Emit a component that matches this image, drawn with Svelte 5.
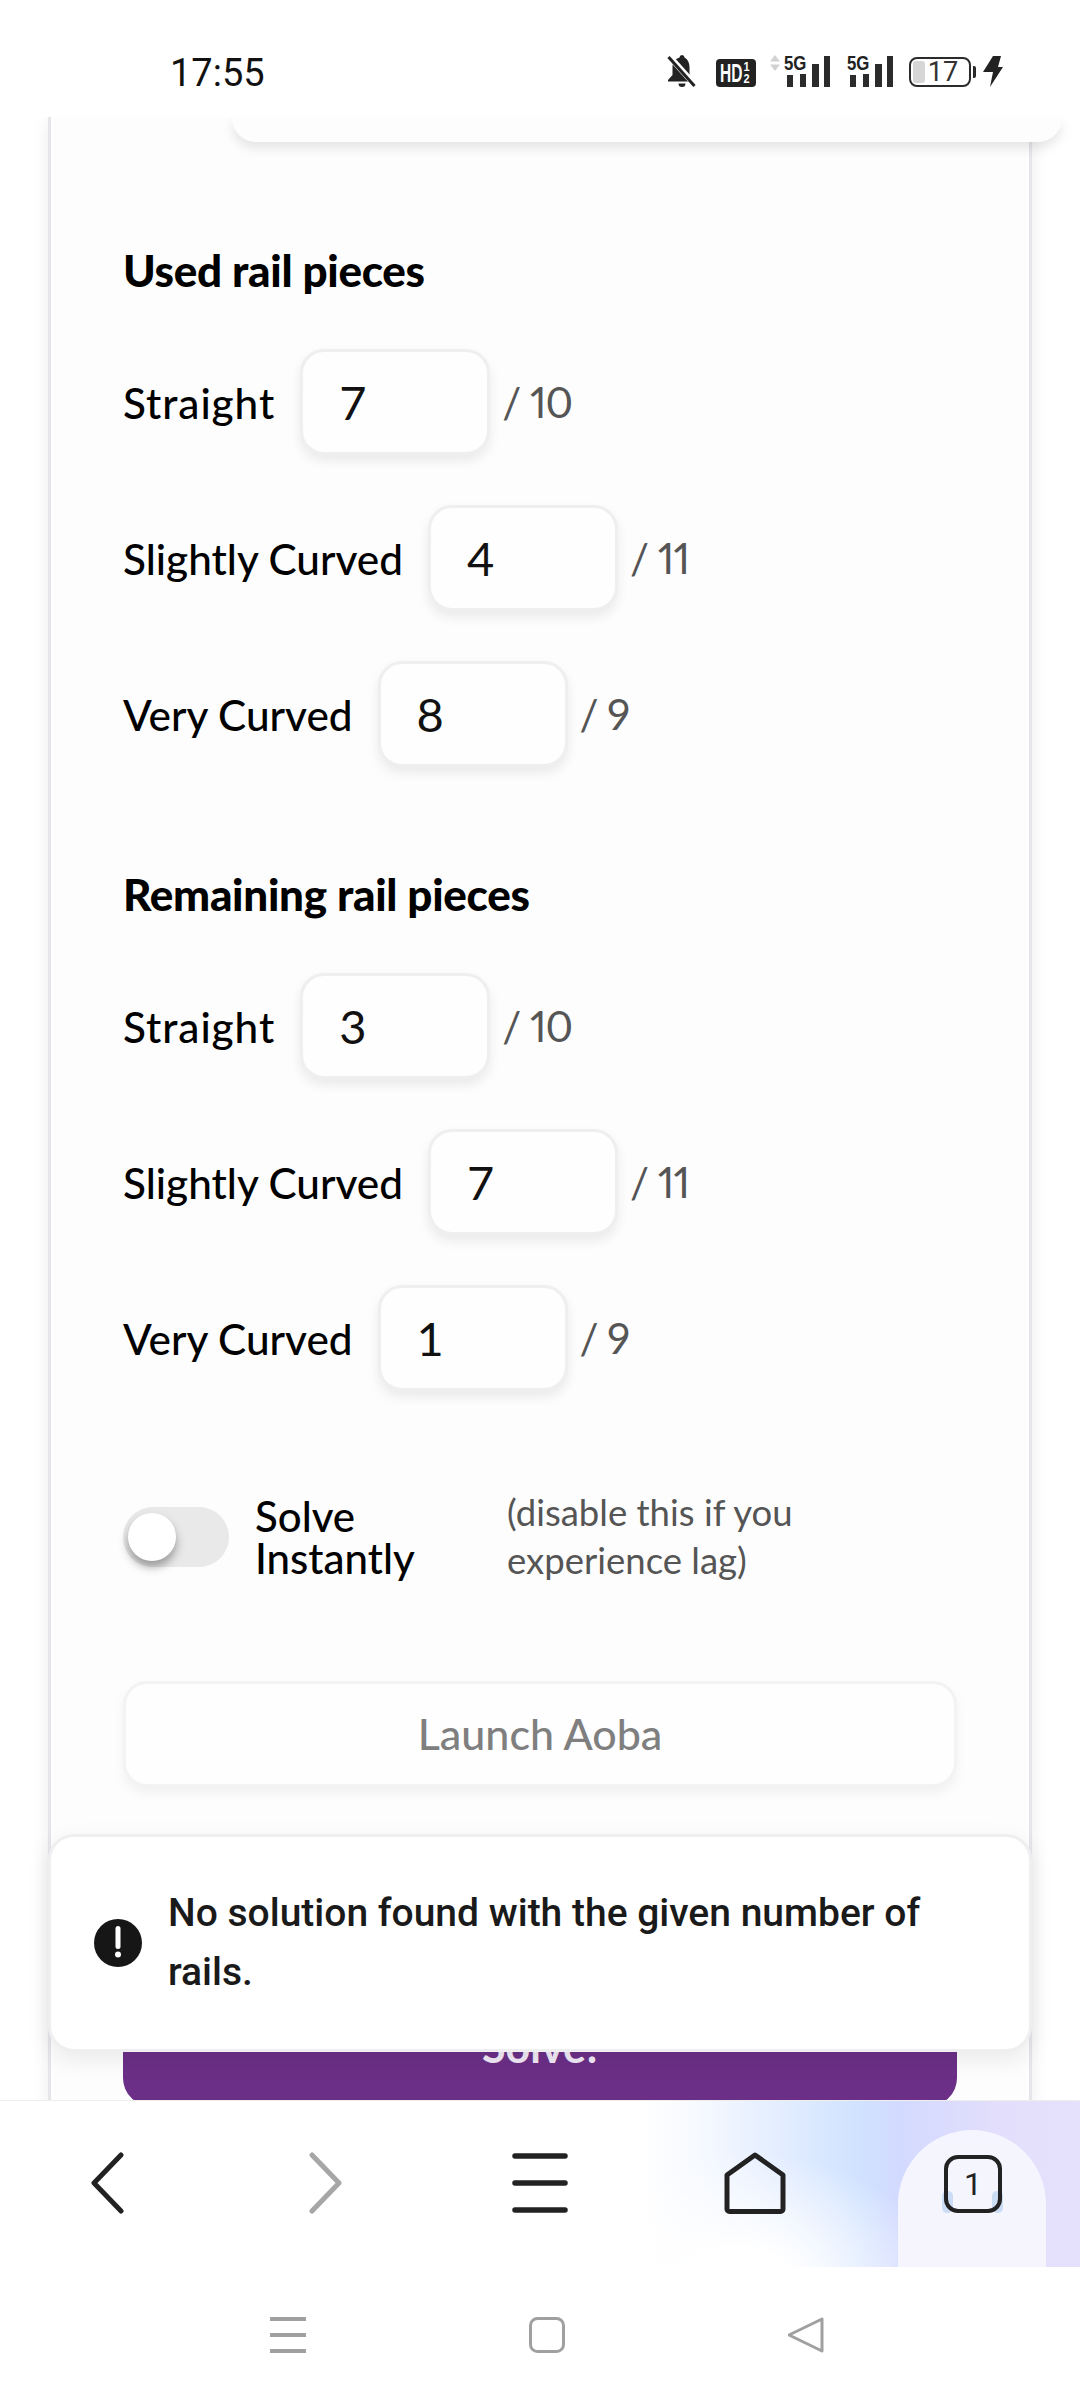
<script>
  const groups = [
    { title: 'Used rail pieces', rows: [['Straight', 7, 10], ['Slightly Curved', 4, 11], ['Very Curved', 8, 9]] },
    { title: 'Remaining rail pieces', rows: [['Straight', 3, 10], ['Slightly Curved', 7, 11], ['Very Curved', 1, 9]] }
  ];
</script>

<div class="phone">
  <header class="status">
    <span class="time">17:55</span>
    <div class="status-icons">
      <svg class="bell" width="32" height="34" viewBox="0 0 32 34">
        <path d="M16 1a2.6 2.6 0 0 0-2.5 2.6C8.5 5 6.5 9 6.5 13v8L2 26v1.500h26V26l-4.500-5v-8c0-4-2-8-5-9.400A2.600 2.600 0 0 0 16 1z" fill="#222"/>
        <path d="M12.500 29.500h7a3.500 3.500 0 0 1-7 0z" fill="#222"/>
        <path d="M3 2l26 29" stroke="#fff" stroke-width="6"/>
        <path d="M2.500 3l26 29" stroke="#222" stroke-width="3"/>
      </svg>
      <div class="hd"><span class="hd-text">HD</span><span class="hd-frac"><i>1</i><i>2</i></span></div>
      <div class="signal first">
        <svg class="arrows" width="10" height="16" viewBox="0 0 10 16"><path d="M5 0l5 6.500H0zM5 16l5-6.500H0z" fill="#d2d2d2"/></svg>
        <div class="net"><span class="fiveg">5G</span>
          <svg width="44" height="31" viewBox="0 0 44 31"><path d="M0 19h6v12H0zM13 18h6v13h-6zM25 8h7v23h-7zM37 0h6v31h-6z" fill="#2b2b2b"/></svg>
        </div>
      </div>
      <div class="signal">
        <div class="net"><span class="fiveg">5G</span>
          <svg width="44" height="31" viewBox="0 0 44 31"><path d="M0 19h6v12H0zM13 18h6v13h-6zM25 8h7v23h-7zM37 0h6v31h-6z" fill="#2b2b2b"/></svg>
        </div>
      </div>
      <div class="battery"><i class="level"></i><span>17</span></div>
      <i class="tip"></i>
      <svg class="bolt" width="20" height="31" viewBox="0 0 20 31"><path d="M10 0h8l-3 11h5L7 31l3-15H0z" fill="#222"/></svg>
    </div>
  </header>

  <main class="viewport">
    <section class="card">
      <div class="top-card"></div>
      {#each groups as g}
        <h2>{g.title}</h2>
        {#each g.rows as [label, value, max]}
          <div class="row">
            <span class="label" class:wide={label === 'Straight'}>{label}</span>
            <div class="input">{value}</div>
            <span class="max">/ {max}</span>
          </div>
        {/each}
      {/each}
      <div class="solve-row">
        <div class="toggle"><i class="knob"></i></div>
        <span class="solve-label">Solve Instantly</span>
        <span class="note">(disable this if you experience lag)</span>
      </div>
      <div class="launch">Launch Aoba</div>
      <div class="solve">Solve!</div>
    </section>

    <div class="toast">
      <svg width="48" height="48" viewBox="0 0 48 48"><circle cx="24" cy="24" r="24" fill="#161616"/><path d="M24 9.500v18" stroke="#fff" stroke-width="5" stroke-linecap="round"/><circle cx="24" cy="35.500" r="3" fill="#fff"/></svg>
      <p>No solution found with the given number of rails.</p>
    </div>
  </main>

  <nav class="browser-nav">
    <svg class="nav-ico" width="36" height="62" viewBox="0 0 36 62"><path d="M32 3L5 31l27 28" fill="none" stroke="#222" stroke-width="5" stroke-linecap="round" stroke-linejoin="round"/></svg>
    <svg class="nav-ico" width="36" height="62" viewBox="0 0 36 62"><path d="M4 3l27 28L4 59" fill="none" stroke="#a6a6a6" stroke-width="5" stroke-linecap="round" stroke-linejoin="round"/></svg>
    <svg class="nav-ico" width="56" height="62" viewBox="0 0 56 62"><path d="M3 4h50M3 31h50M3 58h50" fill="none" stroke="#222" stroke-width="5.500" stroke-linecap="round"/></svg>
    <svg class="nav-ico home" width="62" height="62" viewBox="0 0 62 62"><path d="M31 3l28 20v34a2.500 2.500 0 0 1-2.500 2.500h-51A2.500 2.500 0 0 1 3 57V23z" fill="none" stroke="#222" stroke-width="5" stroke-linejoin="round"/></svg>
    <div class="tab-arch">
      <i class="mark left"></i><i class="mark right"></i>
      <div class="tab-count">1</div>
    </div>
  </nav>

  <footer class="sys-nav">
    <svg width="36" height="36" viewBox="0 0 36 36"><path d="M0 2h36M0 18h36M0 34h36" stroke="#a0a0a0" stroke-width="4"/></svg>
    <svg width="36" height="36" viewBox="0 0 36 36"><rect x="1.500" y="1.500" width="33" height="33" rx="7" fill="none" stroke="#a0a0a0" stroke-width="3"/></svg>
    <svg width="36" height="36" viewBox="0 0 36 36"><path d="M34 2v32L1 18z" fill="none" stroke="#a0a0a0" stroke-width="3" stroke-linejoin="round"/></svg>
  </footer>
</div>

<style>
  :global(body) { margin: 0; background: #fff; }
  .phone { width: 1080px; height: 2400px; display: flex; flex-direction: column; overflow: hidden; background: #fff; font-family: "Lato", "Noto Sans", sans-serif; color: #000; }

  .status { height: 117px; flex: none; position: relative; z-index: 3; background: #fff; display: flex; justify-content: space-between; align-items: center; padding: 28px 77px 0 170px; box-sizing: border-box; }
  .time { font: 400 38px Roboto, sans-serif; color: #111; }
  .status-icons { display: flex; align-items: flex-end; height: 31px; margin-top: -2px; }
  .bell { margin-bottom: -1px; margin-right: 18px; }
  .hd { width: 40px; height: 28px; border-radius: 4px; background: #222; color: #fff; display: flex; align-items: center; font: 700 25px "Liberation Sans", sans-serif; margin-right: 14px; padding-left: 4px; box-sizing: border-box; }
  .hd-text { width: 23px; flex: none; transform: scaleX(.62); transform-origin: left center; }
  .hd-frac { display: flex; flex-direction: column; font-size: 13px; line-height: 12px; transform: scaleX(.85); }
  .hd-frac i { font-style: normal; }
  .signal { display: flex; align-items: flex-start; position: relative; }
  .signal.first { margin-right: 19px; }
  .arrows { margin-right: 7px; margin-top: -1px; }
  .net { position: relative; width: 44px; height: 31px; }
  .fiveg { position: absolute; left: -3px; top: -2px; font: 700 21px/17px "Liberation Sans", sans-serif; color: #222; transform: scaleX(.8); transform-origin: left center; }
  .battery { width: 62px; height: 30px; box-sizing: border-box; margin-left: 15px; border: 2.500px solid #2b2b2b; border-radius: 8px; position: relative; display: flex; align-items: center; justify-content: center; font: 400 27px Roboto, sans-serif; color: #333; padding-left: 6px; }
  .level { position: absolute; left: 2px; top: 2px; bottom: 2px; width: 12px; background: #d6d6d6; border-radius: 3px; }
  .tip { width: 3px; height: 12px; background: #2b2b2b; margin: 0 7px 9px 2px; border-radius: 0 2px 2px 0; }

  .viewport { height: 1983px; flex: none; position: relative; overflow: hidden; }
  .card { margin-left: 48px; width: 984px; height: 2100px; box-sizing: border-box; background: #fdfdfd; border-left: 3px solid #e6e6ea; border-right: 3px solid #e6e6ea; box-shadow: 0 4px 16px rgba(0,0,0,.08); padding: 0 72px; }
  .top-card { width: 830px; height: 25px; margin: 0 -103px 0 109px; background: #fdfdfd; border-radius: 0 0 24px 24px; box-shadow: 0 6px 12px rgba(0,0,0,.1); }
  h2 { margin: 0; font-size: 44px; line-height: 48px; font-weight: 900; letter-spacing: -0.3px; }
  h2:first-of-type { padding-top: 104px; margin-bottom: 55px; }
  h2:not(:first-of-type) { margin-top: 103px; margin-bottom: 55px; }
  .row { display: flex; align-items: center; height: 106px; margin-bottom: 50px; }
  .label { font-size: 42.3px; font-weight: 500; margin-right: 25px; }
  .label.wide { letter-spacing: .93px; }
  .input { width: 190px; height: 106px; box-sizing: border-box; border: 3px solid #efefef; border-radius: 24px; background: #fefefe; box-shadow: 0 6px 12px rgba(0,0,0,.08); display: flex; align-items: center; padding-left: 36px; font-size: 47px; color: #111; }
  .max { font-size: 42px; color: #555; margin-left: 12px; font-variant-numeric: proportional-nums; letter-spacing: -1px; }

  .solve-row { display: flex; align-items: center; margin-top: 98px; height: 96px; }
  .toggle { width: 106px; height: 60px; border-radius: 30px; background: #e9e9e9; position: relative; flex: none; }
  .knob { position: absolute; left: 5px; top: 6px; width: 48px; height: 48px; border-radius: 50%; background: #fff; box-shadow: 0 6px 10px rgba(0,0,0,.35); }
  .solve-label { width: 200px; margin-left: 26px; font-size: 42px; line-height: 42px; font-weight: 500; }
  .note { width: 330px; margin-left: 52px; margin-top: -3px; font-size: 36.500px; line-height: 48px; color: #555; }

  .launch { margin-top: 96px; height: 106px; box-sizing: border-box; border: 3px solid #f3f3f3; border-radius: 24px; background: #fefefe; box-shadow: 0 6px 12px rgba(0,0,0,.05); display: flex; align-items: center; justify-content: center; font-size: 43px; font-weight: 500; color: #7f7f7f; padding-bottom: 2px; }
  .solve { margin-top: 211px; height: 108px; box-sizing: border-box; padding-bottom: 12px; border-radius: 28px; background: #6b2f87; color: #f2e9f6; display: flex; align-items: center; justify-content: center; font-size: 43px; font-weight: 700; }

  .toast { position: absolute; left: 48px; top: 1717px; width: 984px; height: 218px; box-sizing: border-box; background: #fff; border: 3px solid #efeff1; border-radius: 26px; box-shadow: 0 8px 24px rgba(0,0,0,.08); display: flex; align-items: center; padding: 0 50px 0 43px; gap: 26px; z-index: 2; }
  .toast svg { flex: none; }
  .toast p { margin: 0; font: 500 39px/59px Roboto, sans-serif; color: #1a1a1a; }

  .browser-nav { height: 167px; flex: none; position: relative; z-index: 3; box-sizing: border-box; border-top: 1px solid #eeeeef; background:
      radial-gradient(ellipse 200px 130px at 740px 180px, #fff 25%, rgba(255,255,255,0) 100%),
      linear-gradient(90deg, #fff 640px, #f6f9ff 700px, #d0e2ff 860px, #d3daff 900px, #e3defb 1000px, #e5e0fb 1080px); display: flex; align-items: flex-start; padding: 51px 0 0 89px; }
  .nav-ico { flex: none; }
  .nav-ico:nth-child(2) { margin-left: 183px; }
  .nav-ico:nth-child(3) { margin-left: 168px; }
  .nav-ico.home { margin-left: 156px; }
  .tab-arch { position: absolute; left: 898px; top: 29px; width: 148px; height: 137px; border-radius: 74px 74px 0 0; background: linear-gradient(#f4f5fe, #f6f5fe); }
  .tab-count { position: absolute; left: 46px; top: 25px; width: 58px; height: 58px; box-sizing: border-box; border: 4px solid #222; border-radius: 14px; display: flex; align-items: center; justify-content: center; font: 400 32px Roboto, sans-serif; color: #222; }
  .mark { position: absolute; top: 61px; width: 11px; height: 22px; background: #cbdcf5; border-radius: 5px; }
  .mark.left { left: 44px; }
  .mark.right { left: 94px; }

  .sys-nav { flex: 1; display: flex; align-items: flex-start; padding: 50px 0 0 270px; gap: 223px; background: #fff; position: relative; z-index: 3; }
</style>
